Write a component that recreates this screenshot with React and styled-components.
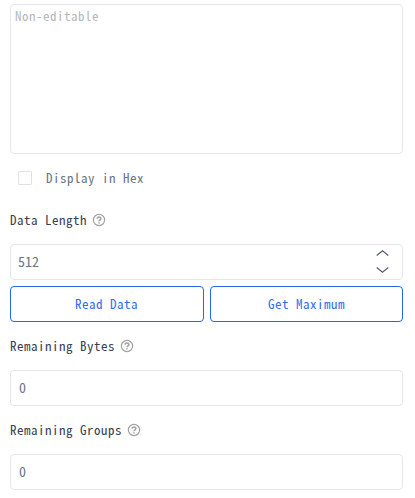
import React from "react";
import styled, { createGlobalStyle } from "styled-components";

const GlobalStyle = createGlobalStyle`
  * { box-sizing: border-box; }
  body {
    margin: 0;
    background: #fff;
    font-family: "Noto Sans CJK JP", "Liberation Mono", monospace;
    font-feature-settings: "hwid" 1;
    font-size: 13px;
    font-weight: 400;
    letter-spacing: 0.5px;
  }
`;

const Panel = styled.main`
  display: flex;
  flex-direction: column;
  width: 415px;
  height: 498px;
  padding: 4px 12px 0 10px;
  overflow: hidden;
`;

const TextArea = styled.textarea`
  display: block;
  width: 100%;
  height: 150px;
  flex: none;
  padding: 0 4px;
  border: 1px solid #e4e6e9;
  border-radius: 4px;
  outline: none;
  resize: none;
  background: #fff;
  font: inherit;
  font-feature-settings: inherit;
  letter-spacing: inherit;
  line-height: 21px;
  &::placeholder { color: #b4b8c0; opacity: 1; }
`;

const CheckRow = styled.label`
  display: flex;
  align-items: center;
  gap: 14px;
  height: 48px;
  flex: none;
  padding-left: 8px;
  color: #6b7482;
`;

const CheckBox = styled.input`
  appearance: none;
  width: 14px;
  height: 14px;
  margin: 0;
  border: 1px solid #e0e2e5;
  border-radius: 1px;
`;

const Caption = styled.span`
  padding-bottom: 2px;
`;

const FieldLabel = styled.div`
  display: flex;
  align-items: center;
  gap: 6px;
  height: 36px;
  flex: none;
  margin-bottom: 6px;
  color: #374151;
`;

const HelpIcon = styled.svg`
  width: 12px;
  height: 12px;
  flex: none;
  overflow: visible;
  fill: none;
  stroke: #a2a2a2;
`;

const Field = styled.div`
  display: flex;
  align-items: center;
  justify-content: space-between;
  height: 36px;
  flex: none;
  padding: 0 13px 0 ${(p) => p.$inset}px;
  border: 1px solid #e4e6e9;
  border-radius: 4px;
  color: #6b7482;
`;

const Value = styled.span`
  padding-bottom: 3px;
  font-size: 14px;
  letter-spacing: 0;
`;

const Stepper = styled.div`
  display: flex;
  flex-direction: column;
  gap: 11px;
  padding-bottom: 1px;
`;

const Arrow = styled.svg`
  width: 13px;
  height: 6px;
  fill: none;
  stroke: #4d5b74;
  stroke-width: 1.1;
`;

const Actions = styled.div`
  display: grid;
  grid-template-columns: 194px 193px;
  gap: 6px;
  flex: none;
  margin: 6px 0;
`;

const ActionButton = styled.button`
  height: 36px;
  padding: 0 ${(p) => p.$trim || 0}px 2px 0;
  border: 1px solid #2468e8;
  border-radius: 4px;
  background: #fff;
  color: #2f6ef0;
  font: inherit;
  font-feature-settings: inherit;
  letter-spacing: inherit;
`;

const Gap = styled.div`
  height: 6px;
  flex: none;
`;

function Label({ children }) {
  return (
    <FieldLabel>
      <Caption>{children}</Caption>
      <HelpIcon viewBox="0 0 12 12">
        <circle cx="6" cy="6" r="5.6" strokeWidth="1.2" />
        <path d="M4.2 4.8C4.2 2.5 7.8 2.5 7.8 4.7C7.8 6 6 5.9 6 7.3M6 8.2V9.5" strokeWidth="1.6" />
      </HelpIcon>
    </FieldLabel>
  );
}

export default function App() {
  return (
    <>
      <GlobalStyle />
      <Panel>
        <TextArea placeholder="Non-editable" readOnly />
        <CheckRow>
          <CheckBox type="checkbox" />
          <Caption>Display in Hex</Caption>
        </CheckRow>
        <Label>Data Length</Label>
        <Field $inset={7}>
          <Value>512</Value>
          <Stepper>
            <Arrow viewBox="0 0 13 6"><path d="M.7 5.5L6.5.8L12.3 5.5" /></Arrow>
            <Arrow viewBox="0 0 13 6"><path d="M.7.5L6.5 5.2L12.3.5" /></Arrow>
          </Stepper>
        </Field>
        <Actions>
          <ActionButton $trim={1}>Read Data</ActionButton>
          <ActionButton>Get Maximum</ActionButton>
        </Actions>
        <Label>Remaining Bytes</Label>
        <Field $inset={8}><Value>0</Value></Field>
        <Gap />
        <Label>Remaining Groups</Label>
        <Field $inset={8}><Value>0</Value></Field>
      </Panel>
    </>
  );
}
